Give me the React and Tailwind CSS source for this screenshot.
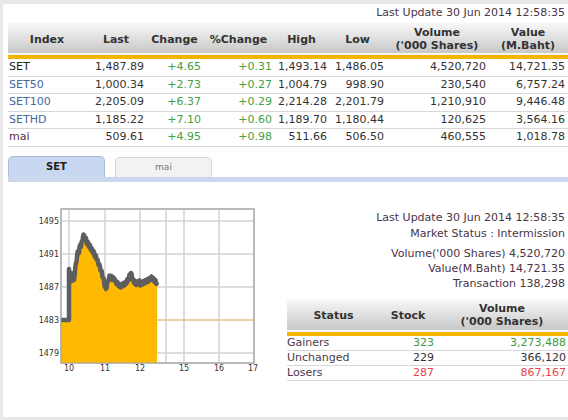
import React from 'react';

const indices = [
  { name: 'SET', color: 'text-[#222]', last: '1,487.89', chg: '+4.65', pct: '+0.31', high: '1,493.14', low: '1,486.05', vol: '4,520,720', val: '14,721.35' },
  { name: 'SET50', color: 'text-[#46679c]', last: '1,000.34', chg: '+2.73', pct: '+0.27', high: '1,004.79', low: '998.90', vol: '230,540', val: '6,757.24' },
  { name: 'SET100', color: 'text-[#46679c]', last: '2,205.09', chg: '+6.37', pct: '+0.29', high: '2,214.28', low: '2,201.79', vol: '1,210,910', val: '9,446.48' },
  { name: 'SETHD', color: 'text-[#46679c]', last: '1,185.22', chg: '+7.10', pct: '+0.60', high: '1,189.70', low: '1,180.44', vol: '120,625', val: '3,564.16' },
  { name: 'mai', color: 'text-[#5a2a4a]', last: '509.61', chg: '+4.95', pct: '+0.98', high: '511.66', low: '506.50', vol: '460,555', val: '1,018.78' },
];

const statusRows = [
  { label: 'Gainers', stock: '323', vol: '3,273,488', color: 'text-[#3f9a3f]' },
  { label: 'Unchanged', stock: '229', vol: '366,120', color: 'text-[#333]' },
  { label: 'Losers', stock: '287', vol: '867,167', color: 'text-[#e8424c]' },
];

// price line, page coordinates
const pts = [
  [61, 319], [69, 319], [69, 268], [70, 281], [71, 272], [72, 280], [73, 276], [74, 279], [75, 270], [76, 262],
  [77, 256], [78, 250], [79, 252], [80, 244], [81, 246], [82, 240], [83, 236], [84, 234], [85, 239], [86, 237],
  [87, 243], [88, 241], [89, 246], [90, 244], [91, 249], [92, 248], [93, 252], [94, 251], [95, 256], [96, 255],
  [97, 259], [98, 261], [99, 264], [100, 266], [101, 270], [102, 272], [103, 277], [104, 280], [105, 286], [106, 288],
  [107, 283], [108, 280], [109, 277], [110, 275], [111, 277], [112, 276], [113, 279], [114, 277], [115, 279], [116, 282],
  [117, 281], [118, 284], [119, 283], [120, 286], [121, 284], [122, 285], [123, 283], [124, 284], [125, 282], [126, 283],
  [127, 279], [128, 280], [129, 276], [130, 274], [131, 272], [132, 276], [133, 278], [134, 282], [135, 280], [136, 284],
  [137, 281], [138, 283], [139, 280], [140, 282], [141, 284], [142, 281], [143, 283], [144, 280], [145, 282], [146, 279],
  [147, 281], [148, 278], [149, 280], [150, 277], [151, 276], [152, 278], [153, 277], [154, 280], [155, 279], [156, 282],
  [157, 281],
];

// add small ticks between points so the line looks like intraday noise
const jagged = [];
pts.forEach((p, i) => {
  jagged.push(p);
  const n = pts[i + 1];
  if (n && p[0] >= 70 && n[0] !== p[0]) {
    jagged.push([p[0] + 0.5, (p[1] + n[1]) / 2 + (i % 2 ? 1.5 : -1.5)]);
  }
});

const line = jagged.map((p) => p.join(',')).join(' ');
const area = line + ' 157,362 61,362';

const Chart = () => (
  <svg width="281" height="236" viewBox="3 181 281 236" className="shrink-0">
    <rect x="61" y="208" width="193" height="154" fill="#fff" stroke="#a8a8a8" />
    {[220, 253, 286, 319, 352].map((y) => (
      <line key={y} x1="61" x2="254" y1={y} y2={y} stroke="#d2d2d2" strokeWidth="1.5" />
    ))}
    {[69, 105, 140, 166, 184, 219].map((x) => (
      <line key={x} x1={x} x2={x} y1="208" y2="362" stroke="#d2d2d2" strokeWidth="1.5" />
    ))}
    <line x1="157" x2="254" y1="319" y2="319" stroke="#f2c46a" strokeWidth="1" />
    <polygon points={area} fill="#ffb900" />
    <polyline points={line} fill="none" stroke="#5e5e5e" strokeWidth="4.5" strokeLinejoin="round" />
    <rect x="61" y="208" width="193" height="154" fill="none" stroke="#a0a0a0" />
    <g fontFamily="DejaVu Sans, sans-serif" fontSize="8" fill="#333" textAnchor="end">
      {[['1495', 220], ['1491', 253], ['1487', 286], ['1483', 319], ['1479', 352]].map(([t, y]) => (
        <text key={t} x="59" y={y + 3}>{t}</text>
      ))}
    </g>
    <g fontFamily="DejaVu Sans, sans-serif" fontSize="8" fill="#333" textAnchor="middle">
      {[['10', 69], ['11', 105], ['12', 140], ['15', 184], ['16', 219], ['17', 253]].map(([t, x]) => (
        <text key={t} x={x} y="370">{t}</text>
      ))}
    </g>
  </svg>
);

export default function App() {
  return (
    <div
      className="w-[568px] h-[420px] overflow-hidden bg-white border-t-4 border-l-[3px] border-b-[3px] border-[#e8e8e8] text-[11px] text-[#333]"
      style={{ fontFamily: 'Tahoma, "DejaVu Sans", sans-serif' }}
    >
      <div className="h-[19px] flex items-center justify-end pr-[3px] text-[#4a3348]">
        Last Update 30 Jun 2014 12:58:35
      </div>

      {/* index table */}
      <table className="ml-[5px] w-[560px] border-collapse table-fixed">
        <colgroup>
          <col className="w-[78px]" />
          <col className="w-[60px]" />
          <col className="w-[57px]" />
          <col className="w-[71px]" />
          <col className="w-[55px]" />
          <col className="w-[57px]" />
          <col className="w-[102px]" />
          <col className="w-[80px]" />
        </colgroup>
        <thead>
          <tr className="h-[34px] bg-gradient-to-b from-[#f8f8f8] to-[#c8c8c8] border-b-4 border-[#f4b400] text-[#333] leading-[13px]">
            <th className="font-bold">Index</th>
            <th className="font-bold">Last</th>
            <th className="font-bold">Change</th>
            <th className="font-bold">%Change</th>
            <th className="font-bold">High</th>
            <th className="font-bold">Low</th>
            <th className="font-bold">Volume<br />('000 Shares)</th>
            <th className="font-bold">Value<br />(M.Baht)</th>
          </tr>
        </thead>
        <tbody>
          {indices.map((r) => (
            <tr key={r.name} className="h-[17.6px] border-b border-[#d8d8d8]">
              <td className={`pl-[1px] ${r.color}`}>{r.name}</td>
              <td className="text-right pr-[2px]">{r.last}</td>
              <td className="text-right pr-[2px] text-[#45a045]">{r.chg}</td>
              <td className="text-right pr-[2px] text-[#45a045]">{r.pct}</td>
              <td className="text-right pr-[2px]">{r.high}</td>
              <td className="text-right pr-[2px]">{r.low}</td>
              <td className="text-right pr-[2px]">{r.vol}</td>
              <td className="text-right pr-[3px]">{r.val}</td>
            </tr>
          ))}
        </tbody>
      </table>

      {/* tabs */}
      <div className="mt-[9px] ml-[5px] flex items-end gap-[10px] h-[21px]">
        <div className="w-[97px] h-[21px] rounded-t-[5px] border border-b-0 border-[#a9bbdb] bg-[#c8d8f1] flex items-center justify-center font-bold text-[10px] text-[#222]">
          SET
        </div>
        <div className="w-[97px] h-[20px] rounded-t-[5px] border border-b-0 border-[#d6d6d6] bg-[#f2f2f2] flex items-center justify-center text-[9px] text-[#777]">
          mai
        </div>
      </div>
      <div className="ml-[5px] h-[5px] bg-[#cbd8ee]" />

      {/* lower section */}
      <div className="flex">
        <Chart />
        <div className="flex-1 flex flex-col">
          <div className="pt-[28px] pr-[3px] flex flex-col items-end text-[#4a3348]">
            <div className="h-[16px] leading-[16px]">Last Update 30 Jun 2014 12:58:35</div>
            <div className="h-[16px] leading-[16px]">Market Status : Intermission</div>
            <div className="h-[15px] leading-[15px] mt-[4px]">Volume('000 Shares) 4,520,720</div>
            <div className="h-[15px] leading-[15px]">Value(M.Baht) 14,721.35</div>
            <div className="h-[15px] leading-[15px]">Transaction 138,298</div>
          </div>
          <table className="ml-[3px] mt-[8px] w-[281px] border-collapse table-fixed">
            <colgroup>
              <col className="w-[93px]" />
              <col className="w-[56px]" />
              <col className="w-[132px]" />
            </colgroup>
            <thead>
              <tr className="h-[35px] bg-gradient-to-b from-[#f8f8f8] to-[#c8c8c8] border-b-4 border-[#f4b400] leading-[13px]">
                <th className="font-bold">Status</th>
                <th className="font-bold">Stock</th>
                <th className="font-bold">Volume<br />('000 Shares)</th>
              </tr>
            </thead>
            <tbody>
              {statusRows.map((r) => (
                <tr key={r.label} className="h-[15px] border-b border-[#d8d8d8]">
                  <td className="text-[#4a3a4a] leading-[14px]">{r.label}</td>
                  <td className={`text-right pr-[2px] leading-[14px] ${r.color}`}>{r.stock}</td>
                  <td className={`text-right pr-[2px] leading-[14px] ${r.color}`}>{r.vol}</td>
                </tr>
              ))}
            </tbody>
          </table>
        </div>
      </div>
    </div>
  );
}
